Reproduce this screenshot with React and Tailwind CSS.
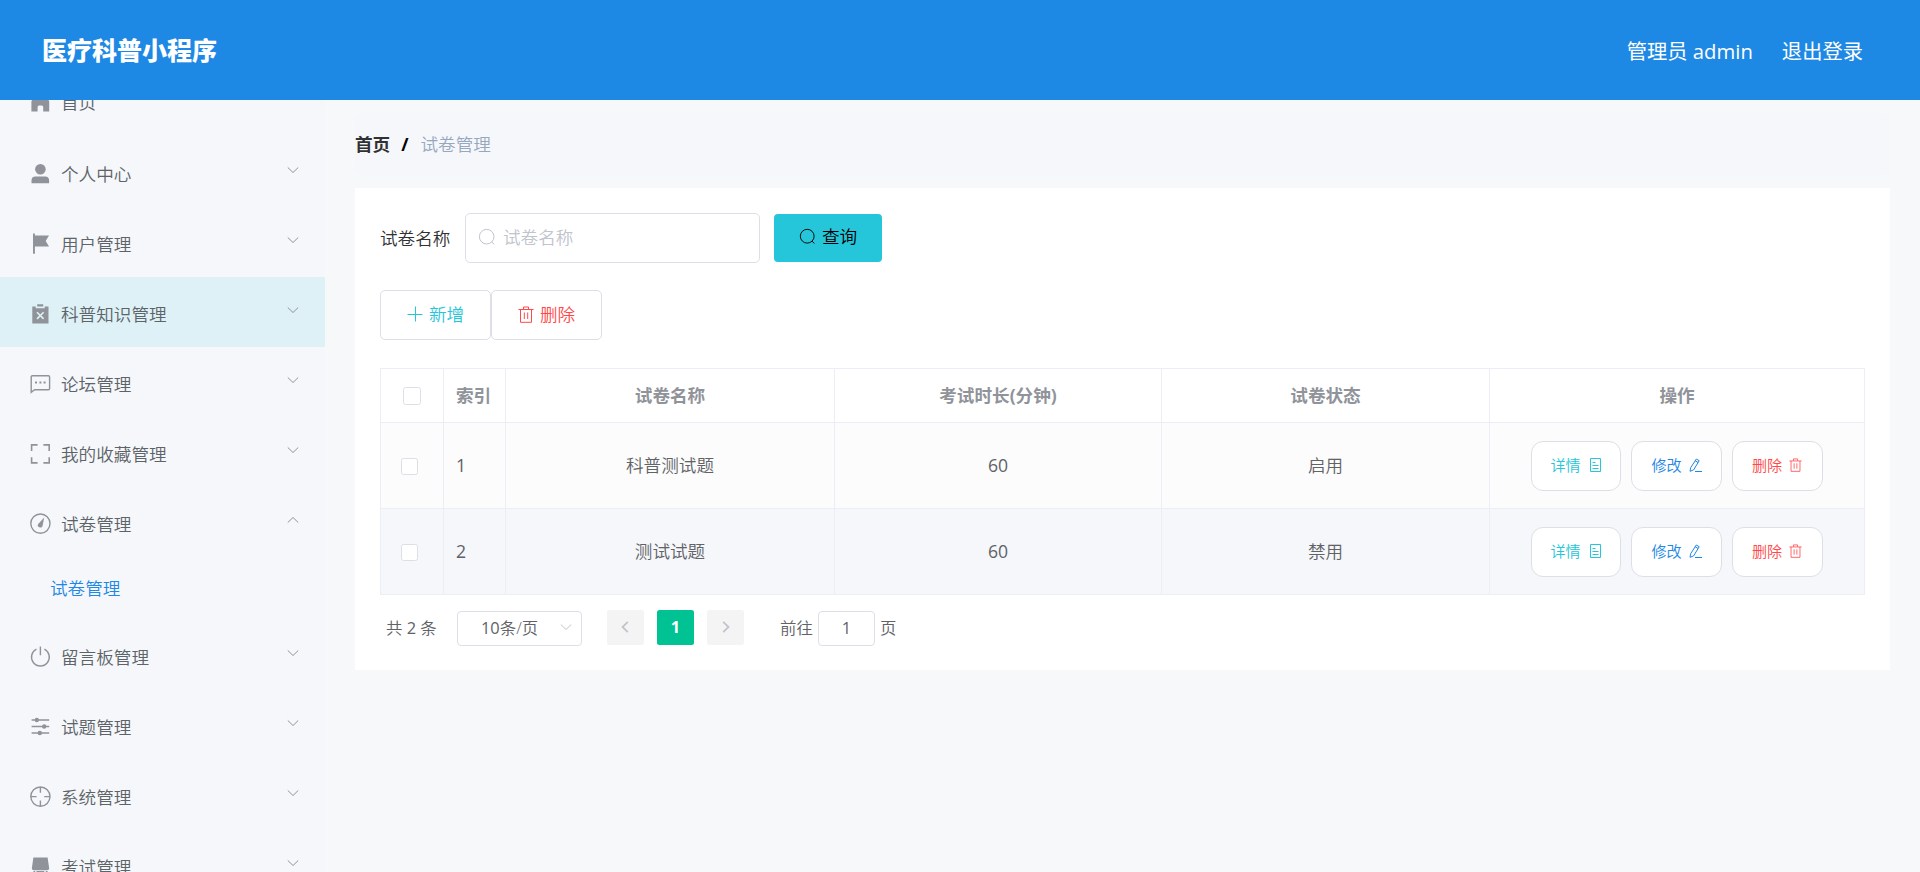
const menuTop = [
  { name: "首页", icon: "home" },
  { name: "个人中心", icon: "user", arrow: "down" },
  { name: "用户管理", icon: "flag", arrow: "down" },
  { name: "科普知识管理", icon: "claim", arrow: "down", hover: true },
  { name: "论坛管理", icon: "chat", arrow: "down" },
  { name: "我的收藏管理", icon: "fullscreen", arrow: "down" },
  { name: "试卷管理", icon: "odometer", arrow: "up", children: ["试卷管理"] },
  { name: "留言板管理", icon: "power", arrow: "down" },
  { name: "试题管理", icon: "operation", arrow: "down" },
  { name: "系统管理", icon: "aim", arrow: "down" },
  { name: "考试管理", icon: "bag", arrow: "down" },
];

const rows = [
  { id: 1, name: "科普测试题", minutes: 60, status: "启用" },
  { id: 2, name: "测试试题", minutes: 60, status: "禁用" },
];

const menuIcons = {
  home: (
    <path d="M11.4 1 3.6 7.6 2.4 10.4V20.5h6.2V16a1.5 1.5 0 0 1 1.5-1.5h2.6a1.5 1.5 0 0 1 1.5 1.5v4.5h6V10.4l-1.2-2.8z" fill="currentColor" />
  ),
  user: (
    <g fill="currentColor">
      <circle cx="11.4" cy="6.3" r="5.3" />
      <path d="M2.5 20.3v-2.8a4 4 0 0 1 4-4h9.6a4 4 0 0 1 4 4v2.8z" />
    </g>
  ),
  flag: (
    <path d="M4 .6h1.9v1.8H20l-3.3 5.7L20 13.6H5.9v7.2H4z" fill="currentColor" />
  ),
  claim: (
    <g>
      <path d="M8.2 1.2h6v2.2h-6zM3.3 3.4h3.4v1.9h9V3.4h3.8v17H3.3z" fill="currentColor" />
      <path d="m8 9.3 6.6 6.6m0-6.6L8 15.9" stroke="#dff1f7" strokeWidth="1.6" />
    </g>
  ),
  chat: (
    <g>
      <path d="M2.2 19.3V3.9a1.2 1.2 0 0 1 1.2-1.2h16a1.2 1.2 0 0 1 1.2 1.2v11.6a1.2 1.2 0 0 1-1.2 1.2H5.6z" fill="none" stroke="currentColor" strokeWidth="1.4" />
      <path d="M6 8.6h2v2H6zM10.4 8.6h2v2h-2zM14.6 8.6h2v2h-2z" fill="currentColor" />
    </g>
  ),
  fullscreen: (
    <path d="M2.6 8V1.9h6M14.4 1.9h5.8V8M20.2 14.2v5.7h-5.8M8.6 19.9h-6v-5.7" fill="none" stroke="currentColor" strokeWidth="1.6" />
  ),
  odometer: (
    <g>
      <circle cx="11.4" cy="10.6" r="9.6" fill="none" stroke="currentColor" strokeWidth="1.4" />
      <path d="m15.2 4.4-1.6 8.3a2.4 2.4 0 1 1-4.4-1.8z" fill="currentColor" />
    </g>
  ),
  power: (
    <path d="M7.4 3.2a8.9 8.9 0 1 0 8 0M11.4.6v8.6" fill="none" stroke="currentColor" strokeWidth="1.4" />
  ),
  operation: (
    <g>
      <path d="M2.6 4h17.6M2.6 10.5h17.6M2.6 17h17.6" stroke="currentColor" strokeWidth="1.4" />
      <g fill="currentColor">
        <circle cx="7.8" cy="4" r="2.2" />
        <circle cx="15.2" cy="10.5" r="2.2" />
        <circle cx="10.8" cy="17" r="2.2" />
      </g>
    </g>
  ),
  aim: (
    <g fill="none" stroke="currentColor" strokeWidth="1.4">
      <circle cx="11.4" cy="10.6" r="9.6" />
      <path d="M11.4 1v5.8M11.4 14.4v5.8M1.8 10.6h5.8M15.2 10.6H21" />
    </g>
  ),
  bag: (
    <path d="M4.4 1.6h14.2l1.6 10.8a2 2 0 0 1-2 1.8H4.8a2 2 0 0 1-2-1.8zM4.4 15h1.8v4H4.4zM7.5 15h7.8v4H7.5zM16.8 15h1.8v4h-1.8z" fill="currentColor" />
  ),
};

function MenuIcon({ name }) {
  return (
    <svg viewBox="0 0 22 22" className="w-[22px] h-[22px] shrink-0 mt-[3px] text-[#909399]">
      {menuIcons[name]}
    </svg>
  );
}

function Chevron({ dir }) {
  return (
    <svg viewBox="0 0 12 8" className="w-3 h-2 mb-1 text-[#909399]" fill="none" stroke="currentColor" strokeWidth="1">
      {dir === "up" ? <path d="m.8 6.5 5.2-5 5.2 5" /> : <path d="m.8 1.5 5.2 5 5.2-5" />}
    </svg>
  );
}

function SearchIcon({ className }) {
  return (
    <svg viewBox="0 0 18 18" className={className} fill="none" stroke="currentColor" strokeWidth="1">
      <circle cx="8.7" cy="8.7" r="7.3" />
      <path d="m13.7 13.9 2.6 2.4" />
    </svg>
  );
}

function TrashIcon({ className }) {
  return (
    <svg viewBox="0 0 16 17" className={className} fill="none" stroke="currentColor" strokeWidth="1">
      <path d="M.5 3.5h15M5.5 3.3V1h5v2.3M2.5 3.5v12.8h11V3.5M6.3 6.5v6.5M9.7 6.5v6.5" />
    </svg>
  );
}

function Sidebar() {
  return (
    <aside className="w-[325px] shrink-0 overflow-hidden bg-[#f5f7fb]">
      <ul className="-mt-[35px]">
        {menuTop.map((item) => (
          <li key={item.name} className="first:mb-[2px]">
            <div
              className={
                item.hover
                  ? "flex items-center h-[70px] pl-[29px] pr-[26px] bg-[#ddf1f7]"
                  : "flex items-center h-[70px] pl-[29px] pr-[26px]"
              }
            >
              <MenuIcon name={item.icon} />
              <span className="ml-[10px] mt-[3px] flex-1 text-[#5d6468]">{item.name}</span>
              {item.arrow && <Chevron dir={item.arrow} />}
            </div>
            {item.children?.map((child) => (
              <div key={child} className="flex items-center h-[63px] pl-[50px] pb-[2px] text-[#1e88e5]">
                {child}
              </div>
            ))}
          </li>
        ))}
      </ul>
    </aside>
  );
}

function Checkbox({ className }) {
  return <span className={`block rounded-[2.5px] border border-[#dcdfe6] bg-white ${className}`} />;
}

const actionClass =
  "flex items-center justify-center h-[50px] pb-[2px] rounded-xl border border-[#dcdfe6] bg-white text-[15.1px]";

function RowActions() {
  return (
    <div className="flex justify-center gap-[10px]">
      <button className={`${actionClass} w-[90px] gap-[8px] text-[#26c6da]`}>
        详情
        <svg viewBox="0 0 13 14" className="w-[13px] h-[14px]" fill="none" stroke="currentColor" strokeWidth="1">
          <path d="M1.5.5h10v13h-10zM3.5 4.5h3M3.5 7.5h6M3.5 10.5h6" />
        </svg>
      </button>
      <button className={`${actionClass} w-[91px] gap-[7px] text-[#1e88e5]`}>
        修改
        <svg viewBox="0 0 13 14" className="w-[13px] h-[14px]" fill="none" stroke="currentColor" strokeWidth="1">
          <path d="m7.3 1 2.9 1.7-5.6 9.2L1 13.3l.6-3.5zM6.2 2.8l2.9 1.7M6 13.5h7" />
        </svg>
      </button>
      <button className={`${actionClass} w-[91px] gap-[7px] pr-px text-[#ff4949]`}>
        删除
        <TrashIcon className="w-[13px] h-[14px]" />
      </button>
    </div>
  );
}

function ExamTable() {
  return (
    <table className="w-[1485px] table-fixed border-collapse text-center text-[#606266] [&_td]:border [&_td]:border-[#ebeef5] [&_th]:border [&_th]:border-[#ebeef5]">
      <colgroup>
        <col className="w-[63px]" />
        <col className="w-[62px]" />
        <col className="w-[329px]" />
        <col className="w-[327px]" />
        <col className="w-[328px]" />
        <col className="w-[375px]" />
      </colgroup>
      <thead>
        <tr className="h-[54px] text-[#909399]">
          <th>
            <Checkbox className="w-[18px] h-[18px] ml-[22px]" />
          </th>
          <th className="text-left pl-3 pb-[2px]">索引</th>
          <th className="pb-[2px]">试卷名称</th>
          <th className="pb-[2px]">考试时长(分钟)</th>
          <th className="pb-[2px]">试卷状态</th>
          <th className="pb-[2px]">操作</th>
        </tr>
      </thead>
      <tbody>
        {rows.map((row) => (
          <tr key={row.id} className="h-[86px] bg-[#fcfcfc] even:bg-[#f5f7fb]">
            <td>
              <Checkbox className="w-[17px] h-[17px] ml-5 mt-0.5" />
            </td>
            <td className="text-left pl-3 pb-[2px] font-normal">{row.id}</td>
            <td className="pb-[2px]">{row.name}</td>
            <td className="pb-[2px] font-normal">{row.minutes}</td>
            <td className="pb-[2px]">{row.status}</td>
            <td>
              <RowActions />
            </td>
          </tr>
        ))}
      </tbody>
    </table>
  );
}

function Pagination() {
  return (
    <div className="flex items-center h-[36px] mt-[14px] pl-[6px] text-[16.4px] text-[#606266]">
      <span className="w-[71px] mt-[2px]">
        共 <span className="font-normal">2</span> 条
      </span>
      <div className="flex items-center justify-between w-[125px] h-[35px] mt-[2px] pl-[23px] pr-[9px] rounded-[4px] border border-[#dcdfe6]">
        <span>
          <span className="font-normal">10</span>条/页
        </span>
        <svg viewBox="0 0 12 8" className="w-3 h-2 mb-[2px]" fill="none" stroke="#c0c4cc">
          <path d="m.8 1.5 5.2 5 5.2-5" />
        </svg>
      </div>
      <button className="flex items-center justify-center w-[37px] h-[35px] ml-[25px] pr-[2px] rounded-[2.5px] bg-[#f4f4f5]">
        <svg viewBox="0 0 8 12" className="w-2 h-3" fill="none" stroke="#c0c4cc" strokeWidth="1.8">
          <path d="M6.8.8 1.5 6l5.3 5.2" />
        </svg>
      </button>
      <button className="w-[37px] h-[35px] ml-[13px] rounded-[2.5px] bg-[#00c292] font-bold text-white">
        1
      </button>
      <button className="flex items-center justify-center w-[37px] h-[35px] ml-[13px] rounded-[2.5px] bg-[#f4f4f5]">
        <svg viewBox="0 0 8 12" className="w-2 h-3" fill="none" stroke="#c0c4cc" strokeWidth="1.8">
          <path d="M1.2.8 6.5 6l-5.3 5.2" />
        </svg>
      </button>
      <span className="ml-[36px] w-[38px] mt-[2px]">前往</span>
      <span className="flex items-center justify-center w-[57px] h-[35px] mt-[2px] pb-px rounded-[4px] border border-[#dcdfe6] font-normal">
        1
      </span>
      <span className="ml-[5px] mt-[2px]">页</span>
    </div>
  );
}

export default function App() {
  return (
    <div className="flex flex-col h-[872px] overflow-hidden bg-[#f7f8fa] text-[17.6px] leading-6 font-[350] font-['Open_Sans','Noto_Sans_CJK_SC',sans-serif]">
      <header className="flex items-center justify-between h-[100px] shrink-0 pl-[42px] pr-[57px] bg-[#1e88e5] text-white">
        <h1 className="text-[25px] font-black">医疗科普小程序</h1>
        <div className="flex gap-[29px] pt-[2px] text-[20.3px] font-normal">
          <span>
            管理员 <span className="font-medium">admin</span>
          </span>
          <span>退出登录</span>
        </div>
      </header>
      <div className="flex flex-1 min-h-0">
        <Sidebar />
        <main className="flex-1 pl-[30px] pr-[30px]">
          <nav className="flex items-center h-[62px] mt-[13px] pb-[1px] rounded-[5px] bg-[#f5f7fb]">
            <span className="font-bold text-[#303133]">首页</span>
            <span className="ml-[11px] mr-[12px] font-bold text-black">/</span>
            <span className="text-[#97a8be]">试卷管理</span>
          </nav>
          <section className="mt-[13px] h-[482px] px-[25px] pt-[25px] bg-white">
            <div className="flex items-center h-[50px]">
              <span className="w-[85px] text-[#303133]">试卷名称</span>
              <div className="flex items-center gap-[7px] w-[295px] h-[50px] pl-[12px] pb-[2px] rounded-[5px] border border-[#dcdfe6] text-[#c0c4cc]">
                <SearchIcon className="w-[18px] h-[18px]" />
                <span>试卷名称</span>
              </div>
              <button className="flex items-center justify-center gap-[6px] w-[108px] h-[48px] ml-[14px] pb-[4px] rounded-[4px] bg-[#26c6da] text-black">
                <SearchIcon className="w-[17px] h-[17px]" />
                查询
              </button>
            </div>
            <div className="flex mt-[27px]">
              <button className="flex items-center justify-center gap-[6px] w-[111px] h-[50px] pb-[2px] rounded-[5px] border border-[#dcdfe6] text-[#26c6da]">
                <svg viewBox="0 0 16 16" className="w-4 h-4" stroke="currentColor" strokeWidth="1">
                  <path d="M8.5.5v15M.5 8.5h15" />
                </svg>
                新增
              </button>
              <button className="flex items-center justify-center gap-[6px] w-[111px] h-[50px] pb-[2px] rounded-[5px] border border-[#dcdfe6] text-[#ff4949]">
                <TrashIcon className="w-4 h-[17px]" />
                删除
              </button>
            </div>
            <div className="mt-[28px]">
              <ExamTable />
            </div>
            <Pagination />
          </section>
        </main>
      </div>
    </div>
  );
}
